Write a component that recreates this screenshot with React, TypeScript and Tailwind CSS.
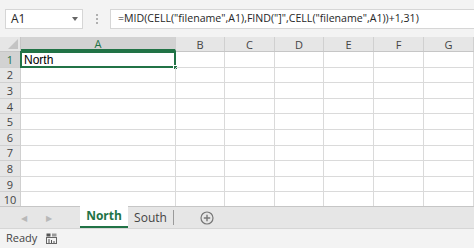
import React from 'react';

const columns = [
  { name: 'A', width: 'w-[155px]' },
  { name: 'B', width: 'w-[49px]' },
  { name: 'C', width: 'w-[50px]' },
  { name: 'D', width: 'w-[49px]' },
  { name: 'E', width: 'w-[50px]' },
  { name: 'F', width: 'w-[50px]' },
  { name: 'G', width: 'w-[50px]' },
];

const rows = [1, 2, 3, 4, 5, 6, 7, 8, 9, 10];

const App: React.FC = () => {
  return (
    <div className="w-[474px] h-[248px] overflow-hidden bg-white flex flex-col font-['Open_Sans',sans-serif] text-[#262626]">
      {/* Formula bar */}
      <div className="h-[37px] flex items-center bg-[#f3f3f3] pl-[5px] shrink-0">
        <div className="w-[78px] h-[20px] bg-white border border-[#d6d6d6] flex items-center justify-between pl-[5px] pr-[4px] text-[12px]">
          <span>A1</span>
          <span className="w-0 h-0 border-l-[3px] border-r-[3px] border-t-[4px] border-l-transparent border-r-transparent border-t-[#666]" />
        </div>
        <div className="w-[27px] flex flex-col items-center gap-[2px]">
          <span className="w-[2px] h-[2px] bg-[#b0b0b0]" />
          <span className="w-[2px] h-[2px] bg-[#b0b0b0]" />
          <span className="w-[2px] h-[2px] bg-[#b0b0b0]" />
        </div>
        <div className="flex-1 h-[20px] bg-white border-y border-l border-[#d6d6d6] flex items-center pl-[7px] text-[10.6px] whitespace-nowrap overflow-hidden">
          =MID(CELL("filename",A1),FIND("]",CELL("filename",A1))+1,31)
        </div>
      </div>

      {/* Grid */}
      <div className="flex-1 flex flex-col overflow-hidden">
        {/* Column headers */}
        <div className="h-[15px] flex bg-[#e6e6e6] border-b border-[#c6c6c6] shrink-0 leading-none">
          <div className="w-[21px] shrink-0 border-r border-[#c6c6c6] flex items-end justify-end pr-[2px] pb-[2px]">
            <svg width="10" height="10" viewBox="0 0 10 10">
              <path d="M10 0V10H0Z" fill="#c4c4c4" />
            </svg>
          </div>
          {columns.map((c) => (
            <div
              key={c.name}
              className={`${c.width} shrink-0 border-r border-[#d0d0d0] flex items-center justify-center text-[11px] ${
                c.name === 'A' ? 'bg-[#d2d2d2] text-[#217346] border-b-2 border-b-[#217346]' : 'text-[#444]'
              }`}
            >
              {c.name}
            </div>
          ))}
        </div>
        {/* Rows */}
        {rows.map((r) => (
          <div key={r} className="h-[15.6px] flex shrink-0 leading-none">
            <div
              className={`w-[21px] shrink-0 flex items-center justify-center text-[11px] border-r border-b border-[#d0d0d0] ${
                r === 1 ? 'bg-[#d2d2d2] text-[#217346]' : 'bg-[#e6e6e6] text-[#444]'
              }`}
            >
              {r}
            </div>
            {columns.map((c) => (
              <div
                key={c.name}
                className={`${c.width} shrink-0 border-r border-b border-[#dadada] relative`}
              >
                {r === 1 && c.name === 'A' && (
                  <>
                    <div className="absolute -left-px -top-px right-[-1px] bottom-[-1px] border-2 border-[#217346]" />
                    <div className="absolute right-[-3px] bottom-[-3px] w-[5px] h-[5px] bg-[#217346] border border-white" />
                    <span className="absolute left-[3px] top-[2px] text-[12px] text-black font-['Liberation_Sans',sans-serif]">
                      North
                    </span>
                  </>
                )}
              </div>
            ))}
          </div>
        ))}
      </div>

      {/* Sheet tabs */}
      <div className="h-[22px] flex items-stretch bg-[#e6e6e6] border-t border-[#c6c6c6] shrink-0">
        <div className="w-[80px] flex items-center pl-[21px] gap-[19px] text-[#b8b8b8] text-[8px]">
          <span>◀</span>
          <span>▶</span>
        </div>
        <div className="w-[48px] bg-white flex items-center justify-center text-[12px] font-bold text-[#217346] border-b-2 border-[#217346] -mt-px">
          North
        </div>
        <div className="w-[46px] flex items-center justify-center text-[12px] text-[#444] border-r border-[#9a9a9a] my-[3px]">
          South
        </div>
        <div className="flex items-center pl-[26px]">
          <svg width="14" height="14" viewBox="0 0 14 14" fill="none">
            <circle cx="7" cy="7" r="6" stroke="#777" strokeWidth="1.2" />
            <path d="M7 3.8v6.4M3.8 7h6.4" stroke="#777" strokeWidth="1.4" />
          </svg>
        </div>
      </div>

      {/* Status bar */}
      <div className="h-[20px] flex items-center bg-[#f3f3f3] border-t border-[#d6d6d6] shrink-0 pl-[6px] text-[11px] text-[#444]">
        <span>Ready</span>
        <svg className="ml-[9px]" width="11" height="11" viewBox="0 0 11 11" fill="none">
          <rect x="0.5" y="0.5" width="4" height="3" fill="#555" />
          <rect x="6" y="0.5" width="4.5" height="3" fill="#999" />
          <rect x="0.5" y="4.5" width="10" height="6" stroke="#666" />
          <path d="M3 6v4M5.5 7v3M8 8v2" stroke="#555" />
        </svg>
      </div>
    </div>
  );
};

export default App;
